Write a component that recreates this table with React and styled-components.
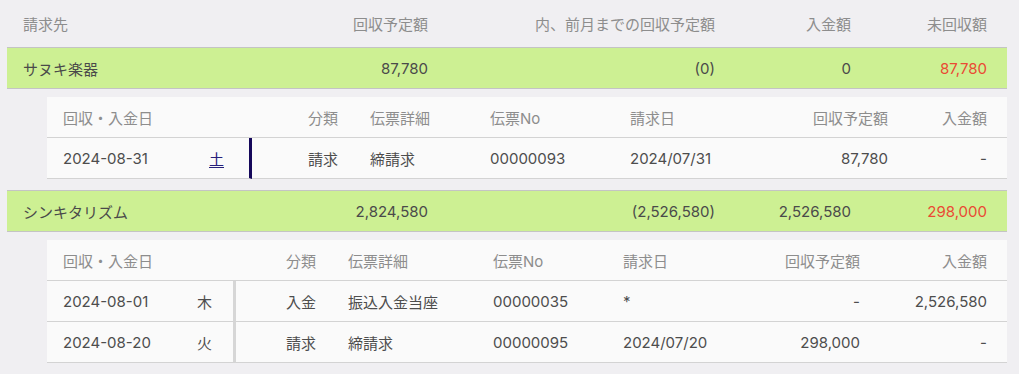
import React from "react";
import styled, { createGlobalStyle } from "styled-components";

const GlobalStyle = createGlobalStyle`
  body {
    margin: 0;
    background: #f0eff2;
    font-family: Inter, "Noto Sans CJK JP", sans-serif;
    font-size: 15px;
    color: #4d4d4d;
  }
`;

const MAIN_COLS = "301px 136px 287px 136px 140px";

const groups = [
  {
    name: "サヌキ楽器",
    planned: "87,780",
    prior: "(0)",
    paid: "0",
    remaining: "87,780",
    cols: "146px 59px 102px 120px 140px 150px 140px 103px",
    bar: "#15085a",
    link: true,
    rows: [
      {
        date: "2024-08-31",
        wd: "土",
        kind: "請求",
        detail: "締請求",
        no: "00000093",
        billed: "2024/07/31",
        planned: "87,780",
        paid: "-",
      },
    ],
  },
  {
    name: "シンキタリズム",
    planned: "2,824,580",
    prior: "(2,526,580)",
    paid: "2,526,580",
    remaining: "298,000",
    cols: "134px 55px 96px 145px 130px 140px 129px 131px",
    bar: "#d6d6d6",
    link: false,
    rows: [
      {
        date: "2024-08-01",
        wd: "木",
        kind: "入金",
        detail: "振込入金当座",
        no: "00000035",
        billed: "*",
        planned: "-",
        paid: "2,526,580",
      },
      {
        date: "2024-08-20",
        wd: "火",
        kind: "請求",
        detail: "締請求",
        no: "00000095",
        billed: "2024/07/20",
        planned: "298,000",
        paid: "-",
      },
    ],
  },
];

export default function App() {
  return (
    <Page>
      <GlobalStyle />
      <SummaryHead>
        <Cell>請求先</Cell>
        <Cell $right>回収予定額</Cell>
        <Cell $right>内、前月までの回収予定額</Cell>
        <Cell $right>入金額</Cell>
        <Cell $right>未回収額</Cell>
      </SummaryHead>
      {groups.map((g) => (
        <Group key={g.name}>
          <CustomerRow>
            <Cell>{g.name}</Cell>
            <Cell $right>{g.planned}</Cell>
            <Cell $right>{g.prior}</Cell>
            <Cell $right>{g.paid}</Cell>
            <Cell $right $red>
              {g.remaining}
            </Cell>
          </CustomerRow>
          <Detail>
            <DetailRow $cols={g.cols} $head>
              <DateHead>回収・入金日</DateHead>
              <Cell $right>分類</Cell>
              <Cell>伝票詳細</Cell>
              <Cell>伝票No</Cell>
              <Cell>請求日</Cell>
              <Cell $right>回収予定額</Cell>
              <Cell $right>入金額</Cell>
            </DetailRow>
            {g.rows.map((r) => (
              <DetailRow $cols={g.cols} key={r.no}>
                <Cell>{r.date}</Cell>
                <Weekday $bar={g.bar} $link={g.link}>
                  <span>{r.wd}</span>
                </Weekday>
                <Cell $right>{r.kind}</Cell>
                <Cell>{r.detail}</Cell>
                <Cell>{r.no}</Cell>
                <Cell>{r.billed}</Cell>
                <Cell $right>{r.planned}</Cell>
                <Cell $right>{r.paid}</Cell>
              </DetailRow>
            ))}
          </Detail>
        </Group>
      ))}
    </Page>
  );
}

const Page = styled.div`
  padding: 0 12px 0 7px;
`;

const Cell = styled.div`
  display: flex;
  align-items: center;
  justify-content: ${(p) => (p.$right ? "flex-end" : "flex-start")};
  padding: 0 16px;
  white-space: nowrap;
  color: ${(p) => (p.$red ? "#ea4a33" : "inherit")};
  &:last-child {
    padding-right: 20px;
  }
`;

const DateHead = styled(Cell)`
  grid-column: span 2;
`;

const SummaryHead = styled.div`
  display: grid;
  grid-template-columns: ${MAIN_COLS};
  height: 47px;
  color: #8d8d8d;
`;

const Group = styled.section`
  display: flex;
  flex-direction: column;
`;

const CustomerRow = styled.div`
  display: grid;
  grid-template-columns: ${MAIN_COLS};
  height: 40px;
  background: #cdf093;
  border-top: 1px solid #c4c4c4;
  border-bottom: 1px solid #c4c4c4;
  color: #4a4a4a;
`;

const Detail = styled.div`
  margin: 8px 0 11px 40px;
  background: #fafafa;
`;

const DetailRow = styled.div`
  display: grid;
  grid-template-columns: ${(p) => p.$cols};
  height: 41px;
  color: ${(p) => (p.$head ? "#8d8d8d" : "#4d4d4d")};
  & > div {
    border-bottom: 1px solid #d3d3d3;
  }
`;

const Weekday = styled(Cell)`
  border-right: 3px solid ${(p) => p.$bar};
  span {
    color: ${(p) => (p.$link ? "#27207a" : "inherit")};
    text-decoration: ${(p) => (p.$link ? "underline" : "none")};
    text-decoration-thickness: 1px;
    text-underline-offset: 2px;
  }
`;
